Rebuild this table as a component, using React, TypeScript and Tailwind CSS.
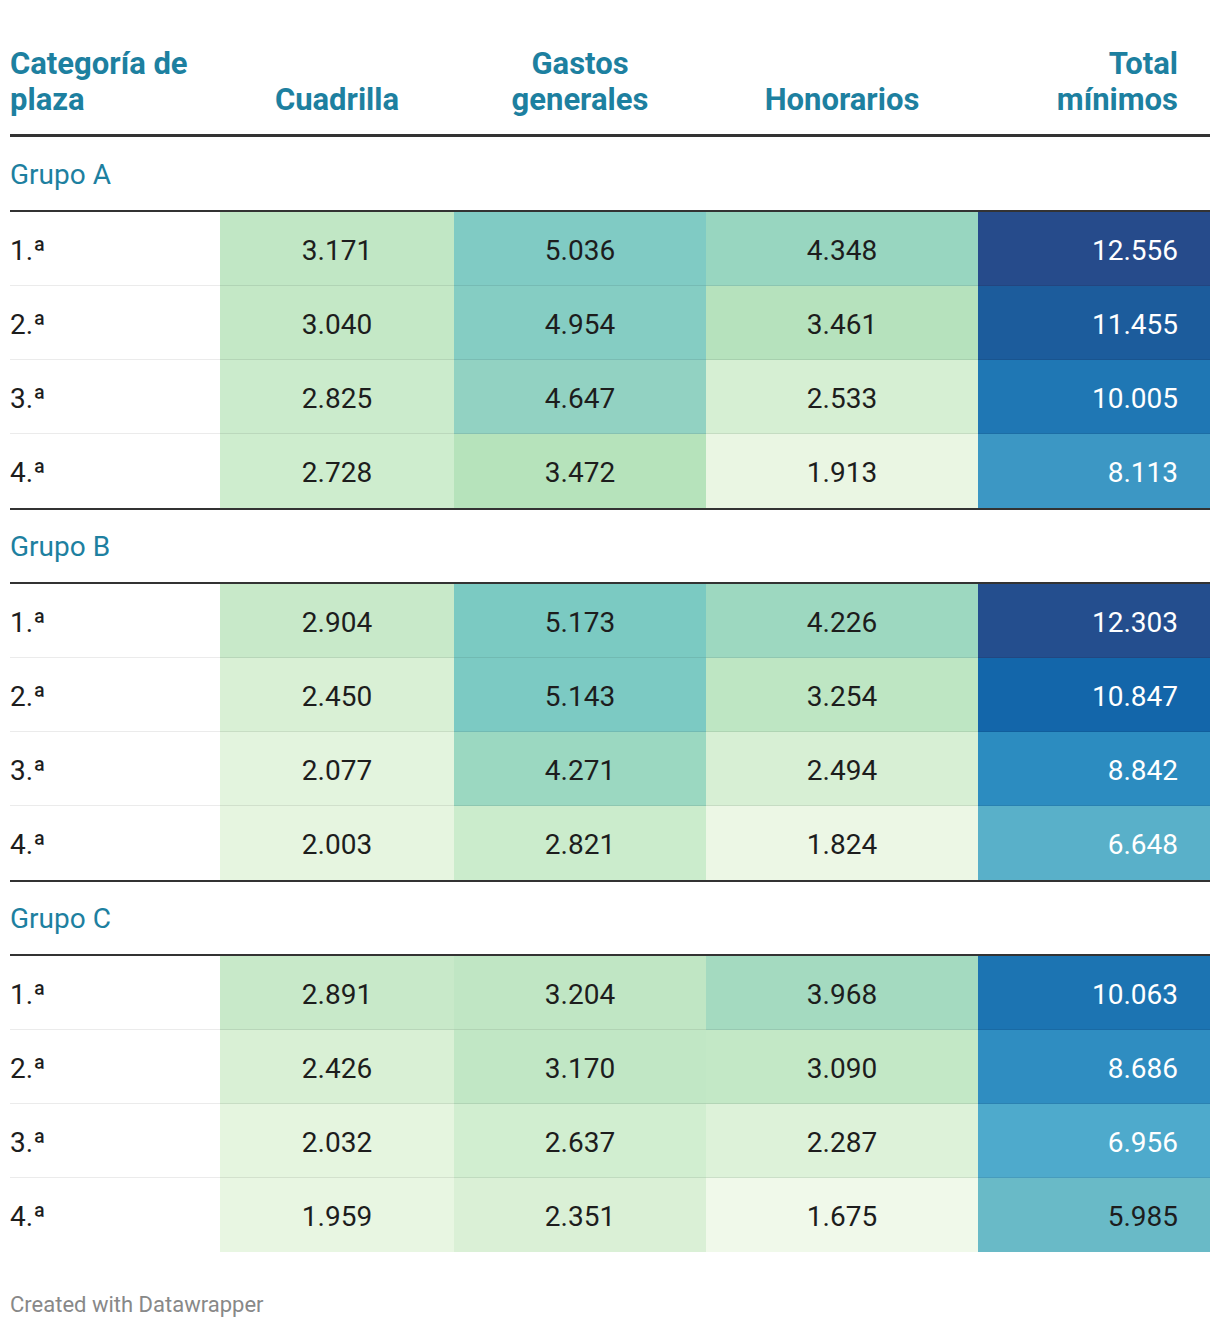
type Cell = { v: string; bg: string; light?: boolean };
type Row = { label: string; cells: Cell[] };
type Group = { name: string; rows: Row[] };

// Heatmap colours read off the original chart, one per cell.
const groups: Group[] = [
  {
    name: "Grupo A",
    rows: [
      { label: "1.ª", cells: [{ v: "3.171", bg: "#c1e7c5" }, { v: "5.036", bg: "#80cbc4" }, { v: "4.348", bg: "#98d6c0" }, { v: "12.556", bg: "#264b8b", light: true }] },
      { label: "2.ª", cells: [{ v: "3.040", bg: "#c4e8c6" }, { v: "4.954", bg: "#85cdc3" }, { v: "3.461", bg: "#b6e2bd" }, { v: "11.455", bg: "#1c5c9c", light: true }] },
      { label: "3.ª", cells: [{ v: "2.825", bg: "#cbebcc" }, { v: "4.647", bg: "#92d2c2" }, { v: "2.533", bg: "#d6efd3" }, { v: "10.005", bg: "#1f77b4", light: true }] },
      { label: "4.ª", cells: [{ v: "2.728", bg: "#ceedce" }, { v: "3.472", bg: "#b6e3bb" }, { v: "1.913", bg: "#eaf6e3" }, { v: "8.113", bg: "#3c97c4", light: true }] },
    ],
  },
  {
    name: "Grupo B",
    rows: [
      { label: "1.ª", cells: [{ v: "2.904", bg: "#c8e9c9" }, { v: "5.173", bg: "#7bcac2" }, { v: "4.226", bg: "#9dd8c0" }, { v: "12.303", bg: "#244e8e", light: true }] },
      { label: "2.ª", cells: [{ v: "2.450", bg: "#d9f0d5" }, { v: "5.143", bg: "#7ccac3" }, { v: "3.254", bg: "#bee6c3" }, { v: "10.847", bg: "#1366aa", light: true }] },
      { label: "3.ª", cells: [{ v: "2.077", bg: "#e3f4de" }, { v: "4.271", bg: "#9bd8c1" }, { v: "2.494", bg: "#d7efd4" }, { v: "8.842", bg: "#2c8cc0", light: true }] },
      { label: "4.ª", cells: [{ v: "2.003", bg: "#e6f5e0" }, { v: "2.821", bg: "#cbeccc" }, { v: "1.824", bg: "#ecf7e5" }, { v: "6.648", bg: "#59b0c9", light: true }] },
    ],
  },
  {
    name: "Grupo C",
    rows: [
      { label: "1.ª", cells: [{ v: "2.891", bg: "#c8e9c9" }, { v: "3.204", bg: "#c0e6c4" }, { v: "3.968", bg: "#a4dac0" }, { v: "10.063", bg: "#1c74b2", light: true }] },
      { label: "2.ª", cells: [{ v: "2.426", bg: "#d9f0d5" }, { v: "3.170", bg: "#c1e7c5" }, { v: "3.090", bg: "#c3e8c6" }, { v: "8.686", bg: "#2f8dc1", light: true }] },
      { label: "3.ª", cells: [{ v: "2.032", bg: "#e5f5df" }, { v: "2.637", bg: "#d1eed0" }, { v: "2.287", bg: "#ddf2d9" }, { v: "6.956", bg: "#4eaacc", light: true }] },
      { label: "4.ª", cells: [{ v: "1.959", bg: "#e8f6e2" }, { v: "2.351", bg: "#daf0d6" }, { v: "1.675", bg: "#f0f9ea" }, { v: "5.985", bg: "#69bac7" }] },
    ],
  },
];

const cols = "grid grid-cols-[210px_234px_252px_272px_232px]";
const head = "text-[31px] font-bold leading-[36px] text-[#1d80a0]";

function Header() {
  return (
    <div className={`${cols} h-[137px] items-end border-b-[3px] border-[#333] pb-[16px]`}>
      <div className={head}>
        Categoría de
        <br />
        plaza
      </div>
      <div className={`${head} text-center`}>Cuadrilla</div>
      <div className={`${head} text-center`}>
        Gastos
        <br />
        generales
      </div>
      <div className={`${head} text-center`}>Honorarios</div>
      <div className={`${head} pr-8 text-right`}>
        Total
        <br />
        mínimos
      </div>
    </div>
  );
}

function DataRow({ row, last }: { row: Row; last: boolean }) {
  const line = last ? "" : "border-b border-black/[0.08]";
  return (
    <div className={`${cols} h-[74px] text-[28px] text-[#1d1d1d]`}>
      <div className={`flex items-center pt-1 ${line}`}>{row.label}</div>
      {row.cells.map((c, i) => (
        <div
          key={i}
          className={`flex items-center pt-1 ${line} ${i === 3 ? "justify-end pr-8" : "justify-center"} ${c.light ? "text-white" : ""}`}
          style={{ backgroundColor: c.bg }}
        >
          {c.v}
        </div>
      ))}
    </div>
  );
}

export default function App() {
  return (
    <div className="bg-white px-[10px] font-['Roboto',sans-serif]">
      <Header />
      {groups.map((g, gi) => (
        <div key={g.name}>
          <div
            className={`flex items-center border-b-2 border-[#333] pt-[2px] text-[28px] text-[#1d80a0] ${gi > 0 ? "h-[76px] border-t-2" : "h-[75px]"}`}
          >
            {g.name}
          </div>
          {g.rows.map((r, ri) => (
            <DataRow key={ri} row={r} last={ri === g.rows.length - 1} />
          ))}
        </div>
      ))}
      <p className="pt-[36px] pb-[8px] text-[22px] leading-[33px] text-[#888]">Created with Datawrapper</p>
    </div>
  );
}
